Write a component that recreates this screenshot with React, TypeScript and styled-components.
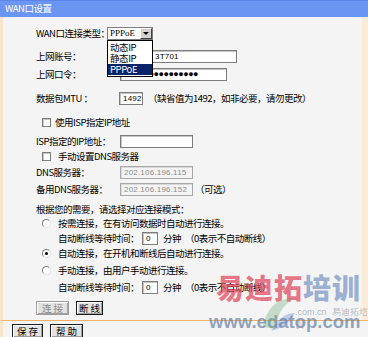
import * as React from 'react'
import styled, { createGlobalStyle } from 'styled-components'

const GlobalStyle = createGlobalStyle`
  html, body {
    margin: 0;
    padding: 0;
    background: #f4f4f4;
  }
  body {
    font-family: "Noto Sans CJK SC", "Noto Sans", sans-serif;
    font-size: 9.5px;
    letter-spacing: -0.5px;
    color: #000;
  }
`

const Frame = styled.div`
  position: relative;
  width: 368px;
  height: 337px;
  overflow: hidden;
  display: flex;
  flex-direction: column;
  background: #f4f4f4;
`

const TitleBar = styled.div`
  height: 17px;
  flex: 0 0 17px;
  box-sizing: border-box;
  border-top: 1px solid #5a86ea;
  background: #6b95f2;
  color: #fff;
  padding-left: 5px;
  line-height: 15px;
`

const Main = styled.div`
  flex: 0 0 303px;
  box-sizing: border-box;
  border-left: 3px solid #fbe5ca;
  border-right: 6px solid #fcebd6;
  padding-left: 33px;
  display: flex;
  flex-direction: column;
`

const Footer = styled.div`
  flex: 1;
  border-top: 1px solid #f1b169;
  border-left: 3px solid #fbe5ca;
  padding: 3px 0 0 9px;
  display: flex;
  gap: 7px;
  align-items: flex-start;
`

const Row = styled.div<{ $top: number; $indent?: number }>`
  display: flex;
  align-items: center;
  height: 14px;
  margin-top: ${p => p.$top}px;
  padding-left: ${p => p.$indent || 0}px;
  white-space: nowrap;
`

const Label = styled.span<{ $w?: number }>`
  display: inline-block;
  width: ${p => (p.$w ? `${p.$w}px` : 'auto')};
  flex: 0 0 auto;
`

const Note = styled.span<{ $gap?: number }>`
  margin-left: ${p => p.$gap || 0}px;
`

const Input = styled.div<{ $w: number; $disabled?: boolean; $pad?: number }>`
  box-sizing: border-box;
  width: ${p => p.$w}px;
  height: 13px;
  border: 1px solid ${p => (p.$disabled ? '#a8a8a8' : '#7d7d7d')};
  box-shadow: inset 1px 1px 0 ${p => (p.$disabled ? '#d8d8d8' : '#c4c4c4')};
  background: ${p => (p.$disabled ? '#f4f4f4' : '#fff')};
  color: ${p => (p.$disabled ? '#8c8c8c' : '#000')};
  font-family: "Liberation Sans", sans-serif;
  font-size: 8px;
  line-height: 11px;
  padding-left: ${p => p.$pad ?? 3}px;
  overflow: hidden;
  letter-spacing: 0.2px;
`

const Dots = styled.span`
  font-size: 9px;
  letter-spacing: -0.5px;
`

const SelectBox = styled.div`
  position: relative;
  box-sizing: border-box;
  width: 46px;
  height: 13px;
  border: 1px solid #7d7d7d;
  background: #fff;
  display: flex;
  align-items: center;
  font-family: "Liberation Serif", serif;
  font-size: 9px;
  letter-spacing: 0;
  padding-left: 2px;
`

const SelectArrow = styled.span`
  margin-left: auto;
  width: 12px;
  height: 11px;
  box-sizing: border-box;
  background: #d6d3ce;
  border: 1px solid;
  border-color: #fff #404040 #404040 #fff;
  display: flex;
  align-items: center;
  justify-content: center;
  &::after {
    content: '';
    border-left: 3px solid transparent;
    border-right: 3px solid transparent;
    border-top: 3px solid #000;
  }
`

const DropList = styled.div`
  position: absolute;
  left: -1px;
  top: 12px;
  width: 46px;
  box-sizing: border-box;
  border: 1px solid #000;
  background: #fff;
  z-index: 5;
  padding: 1px 0;
`

const DropItem = styled.div<{ $active?: boolean }>`
  height: 11px;
  line-height: 11px;
  padding-left: 2px;
  font-size: 9.5px;
  letter-spacing: -0.4px;
  background: ${p => (p.$active ? '#0a246a' : 'transparent')};
  color: ${p => (p.$active ? '#fff' : '#000')};
  font-family: "Noto Sans CJK SC", sans-serif;
`

const Check = styled.span`
  width: 9px;
  height: 9px;
  box-sizing: border-box;
  border: 1px solid #7d7d7d;
  box-shadow: inset 1px 1px 0 #c4c4c4;
  background: #fff;
  margin: 0 0 0 6px;
`

const Radio = styled.span<{ $on?: boolean }>`
  position: relative;
  width: 9px;
  height: 9px;
  box-sizing: border-box;
  border-radius: 50%;
  border: 1px solid #808080;
  border-right-color: #e4e4e4;
  border-bottom-color: #e4e4e4;
  background: #fff;
  margin-left: 6px;
  &::after {
    content: '';
    display: ${p => (p.$on ? 'block' : 'none')};
    position: absolute;
    left: 2px;
    top: 2px;
    width: 3px;
    height: 3px;
    border-radius: 50%;
    background: #000;
  }
`

const Button = styled.div<{ $disabled?: boolean; $w: number }>`
  box-sizing: border-box;
  width: ${p => p.$w}px;
  height: 14px;
  border: 1px solid ${p => (p.$disabled ? '#9c9c9c' : '#1a1a1a')};
  box-shadow: inset 1px 1px 0 #fff, inset -1px -1px 0 #a0a0a0;
  background: #e2e2e2;
  color: ${p => (p.$disabled ? '#8a8a8a' : '#000')};
  text-align: center;
  line-height: 12px;
  letter-spacing: 2px;
  text-indent: 2px;
  white-space: nowrap;
`

const Watermark = styled.div`
  position: absolute;
  left: 209px;
  top: 271px;
  width: 159px;
  pointer-events: none;
  z-index: 10;
  letter-spacing: 0;
`

const MarkCn = styled.div`
  display: flex;
  padding-left: 7px;
  font-size: 28px;
  font-weight: 900;
  line-height: 33px;
  letter-spacing: 1px;
`

const MarkChar = styled.span<{ $color: string }>`
  color: ${p => p.$color};
`

const MarkSub = styled.div`
  position: absolute;
  left: 86px;
  top: 35px;
  font-family: "Liberation Sans", sans-serif;
  font-size: 9px;
  color: rgba(120, 130, 150, 0.55);
`

const MarkUrl = styled.div`
  font-family: "Liberation Sans", sans-serif;
  font-weight: bold;
  font-size: 18.5px;
  line-height: 20px;
  margin-top: 8px;
  color: rgba(100, 125, 165, 0.7);
`

const Swirl = styled.svg`
  position: absolute;
  left: 48px;
  top: 20px;
`

const App: React.FC = () => (
  <>
    <GlobalStyle />
    <Frame>
      <TitleBar>WAN口设置</TitleBar>
      <Main>
        <Row $top={9}>
          <Label $w={71}>WAN口连接类型：</Label>
          <SelectBox>
            PPPoE
            <SelectArrow />
            <DropList>
              <DropItem>动态IP</DropItem>
              <DropItem>静态IP</DropItem>
              <DropItem $active>PPPoE</DropItem>
            </DropList>
          </SelectBox>
        </Row>
        <Row $top={9}>
          <Label $w={84}>上网账号：</Label>
          <Input $w={117} $pad={34}>
            3T701
          </Input>
        </Row>
        <Row $top={4}>
          <Label $w={84}>上网口令：</Label>
          <Input $w={107}>
            <Dots>●●●●●●●●●●●●●●●</Dots>
          </Input>
        </Row>
        <Row $top={10}>
          <Label $w={83}>数据包MTU ：</Label>
          <Input $w={24}>1492</Input>
          <Note $gap={5}>（缺省值为1492，如非必要，请勿更改）</Note>
        </Row>
        <Row $top={10}>
          <Check />
          <Note $gap={4}>使用ISP指定IP地址</Note>
        </Row>
        <Row $top={5}>
          <Label $w={84}>ISP指定的IP地址：</Label>
          <Input $w={73} />
        </Row>
        <Row $top={1}>
          <Check />
          <Note $gap={7}>手动设置DNS服务器</Note>
        </Row>
        <Row $top={2}>
          <Label $w={84}>DNS服务器：</Label>
          <Input $w={73} $disabled>
            202.106.196.115
          </Input>
        </Row>
        <Row $top={3}>
          <Label $w={84}>备用DNS服务器：</Label>
          <Input $w={73} $disabled>
            202.106.196.152
          </Input>
          <Note $gap={2}>（可选）</Note>
        </Row>
        <Row $top={6}>
          <Label>根据您的需要，请选择对应连接模式：</Label>
        </Row>
        <Row $top={0}>
          <Radio />
          <Note $gap={7}>按需连接，在有访问数据时自动进行连接。</Note>
        </Row>
        <Row $top={1} $indent={22}>
          <Label $w={84}>自动断线等待时间：</Label>
          <Input $w={16}>0</Input>
          <Note $gap={5}>分钟</Note>
          <Note $gap={4}>（0表示不自动断线）</Note>
        </Row>
        <Row $top={1}>
          <Radio $on />
          <Note $gap={7}>自动连接，在开机和断线后自动进行连接。</Note>
        </Row>
        <Row $top={3}>
          <Radio />
          <Note $gap={7}>手动连接，由用户手动进行连接。</Note>
        </Row>
        <Row $top={3} $indent={22}>
          <Label $w={84}>自动断线等待时间：</Label>
          <Input $w={16}>0</Input>
          <Note $gap={5}>分钟</Note>
          <Note $gap={4}>（0表示不自动断线）</Note>
        </Row>
        <Row $top={7}>
          <Button $w={33} $disabled>
            连接
          </Button>
          <Note $gap={7} />
          <Button $w={27}>断线</Button>
        </Row>
      </Main>
      <Footer>
        <Button $w={31}>保存</Button>
        <Button $w={33}>帮助</Button>
      </Footer>
      <Watermark>
        <Swirl width="40" height="42" viewBox="0 0 40 42">
          <path d="M6 36 C10 14 24 6 36 8 C26 14 20 24 18 38 Z" fill="rgba(110,170,120,0.35)" />
          <path d="M14 40 C22 26 30 22 38 22 C34 30 28 36 14 40 Z" fill="rgba(90,130,200,0.35)" />
        </Swirl>
        <MarkCn>
          <MarkChar $color="rgba(222,70,90,0.72)">易</MarkChar>
          <MarkChar $color="rgba(222,70,90,0.72)">迪</MarkChar>
          <MarkChar $color="rgba(222,70,90,0.72)">拓</MarkChar>
          <MarkChar $color="rgba(95,130,185,0.62)">培</MarkChar>
          <MarkChar $color="rgba(95,130,185,0.62)">训</MarkChar>
        </MarkCn>
        <MarkSub>.com.cn&nbsp;&nbsp;易迪拓培训</MarkSub>
        <MarkUrl>www.edatop.com</MarkUrl>
      </Watermark>
    </Frame>
  </>
)

export default App
